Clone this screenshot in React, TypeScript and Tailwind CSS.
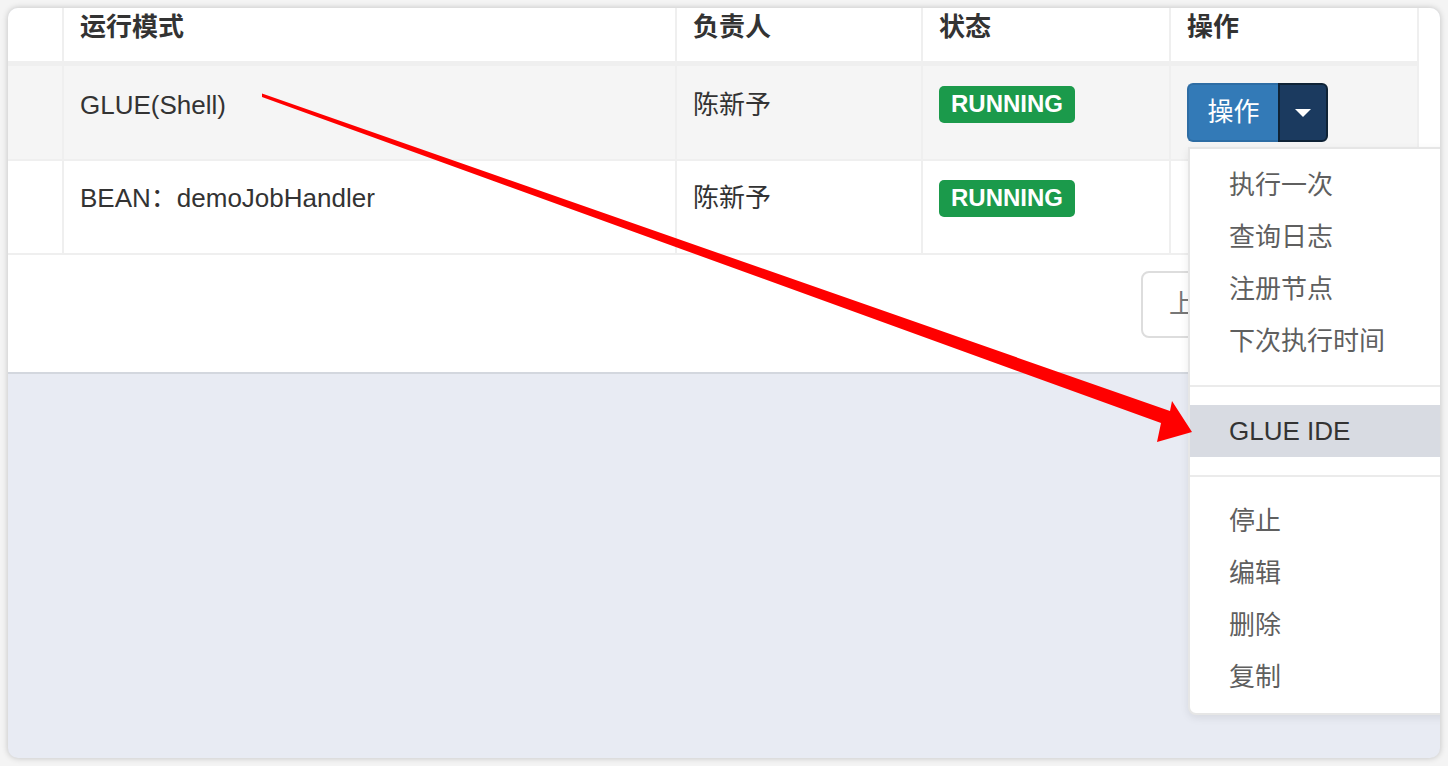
import React from "react";

const FONT = "font-['Liberation_Sans','Noto_Sans_CJK_SC',sans-serif]";

function Badge() {
  return (
    <span className="inline-flex h-[37px] items-center rounded-[5px] bg-[#1b9a4b] px-[12px] text-[24px] font-bold leading-none text-white">
      RUNNING
    </span>
  );
}

function OpButton() {
  return (
    <div className="flex h-[59px]">
      <div className="flex w-[91px] items-center justify-center rounded-l-[6px] border-2 border-r-0 border-[#2e6da4] bg-[#337ab7] text-[26px] text-white">
        操作
      </div>
      <div className="flex w-[50px] items-center justify-center rounded-r-[6px] border-2 border-[#0f2336] bg-[#1b3a5f]">
        <svg width="16" height="8" viewBox="0 0 16 8">
          <path d="M0 0 L16 0 L8 8 Z" fill="#ffffff" />
        </svg>
      </div>
    </div>
  );
}

const cellB = "border-r-2 border-[#efefef]";

function Menu() {
  const top = ["执行一次", "查询日志", "注册节点", "下次执行时间"];
  const bottom = ["停止", "编辑", "删除", "复制"];
  const Item = ({ t, active }: { t: string; active?: boolean }) => (
    <div
      className={
        "flex h-[52px] items-center pl-[39px] text-[26px] " +
        (active ? "bg-[#d8dbe2] text-[#333333]" : "text-[#5f5f5f]")
      }
    >
      {t}
    </div>
  );
  return (
    <div className="absolute left-[1180px] top-[139px] w-[300px] rounded-bl-[8px] border-2 border-[#e6e6e6] bg-white py-[10px] shadow-[0_3px_8px_rgba(0,0,0,0.08)]">
      {top.map((t) => (
        <Item key={t} t={t} />
      ))}
      <div className="my-[18px] h-[2px] bg-[#ebebeb]" />
      <Item t="GLUE IDE" active />
      <div className="my-[18px] h-[2px] bg-[#ebebeb]" />
      {bottom.map((t) => (
        <Item key={t} t={t} />
      ))}
    </div>
  );
}

export default function App() {
  return (
    <div className={"h-[766px] w-[1448px] bg-[#f4f4f4] p-[8px] " + FONT}>
      <div className="relative flex h-full w-full flex-col overflow-hidden rounded-[10px] bg-[#e8ebf3] shadow-[0_0_6px_rgba(0,0,0,0.22)]">
        {/* white box */}
        <div className="h-[366px] shrink-0 border-b-2 border-[#d3d7de] bg-white">
          <div className="w-[1411px] text-[#333333]">
            {/* header */}
            <div className="flex h-[58px] border-b-[5px] border-[#efefef] text-[26px] font-bold">
              <div className={"w-[56px] " + cellB} />
              <div className={"flex w-[613px] items-center pb-[15px] pl-[16px] " + cellB}>运行模式</div>
              <div className={"flex w-[246px] items-center pb-[15px] pl-[16px] " + cellB}>负责人</div>
              <div className={"flex w-[248px] items-center pb-[15px] pl-[16px] " + cellB}>状态</div>
              <div className={"flex w-[248px] items-center pb-[15px] pl-[16px] " + cellB}>操作</div>
            </div>
            {/* row 1 */}
            <div className="flex h-[95px] border-b-2 border-[#efefef] bg-[#f5f5f5] text-[26px]">
              <div className={"w-[56px] " + cellB} />
              <div className={"w-[613px] pl-[16px] pt-[20px] " + cellB}>GLUE(Shell)</div>
              <div className={"w-[246px] pl-[16px] pt-[20px] " + cellB}>陈新予</div>
              <div className={"w-[248px] pl-[16px] pt-[18px] " + cellB}>
                <Badge />
              </div>
              <div className={"w-[248px] pl-[16px] pt-[17px] " + cellB}>
                <OpButton />
              </div>
            </div>
            {/* row 2 */}
            <div className="flex h-[94px] border-b-2 border-[#efefef] text-[26px]">
              <div className={"w-[56px] " + cellB} />
              <div className={"w-[613px] pl-[16px] pt-[18px] " + cellB}>BEAN：demoJobHandler</div>
              <div className={"w-[246px] pl-[16px] pt-[18px] " + cellB}>陈新予</div>
              <div className={"w-[248px] pl-[16px] pt-[17px] " + cellB}>
                <Badge />
              </div>
              <div className={"w-[248px] " + cellB} />
            </div>
            {/* pagination (mostly hidden under the open dropdown) */}
            <div className="flex justify-end pt-[16px]">
              <div className="flex h-[67px] text-[26px] text-[#777777]">
                <div className="flex w-[110px] items-center overflow-hidden rounded-l-[8px] border-2 border-[#dddddd] pl-[26px]">上一页</div>
                <div className="w-[58px] border-y-2 border-[#dddddd]" />
                <div className="w-[110px] rounded-r-[8px] border-2 border-[#dddddd]" />
              </div>
            </div>
          </div>
        </div>
        <div className="flex-1" />
        <Menu />
      </div>
      {/* red arrow annotation */}
      <svg className="pointer-events-none absolute left-0 top-0" width="1448" height="766" viewBox="0 0 1448 766">
        <polygon
          points="262,93.5 1170,411 1172,401 1192,432 1157,442 1161,423 262,97"
          fill="#ff0000"
        />
      </svg>
    </div>
  );
}
